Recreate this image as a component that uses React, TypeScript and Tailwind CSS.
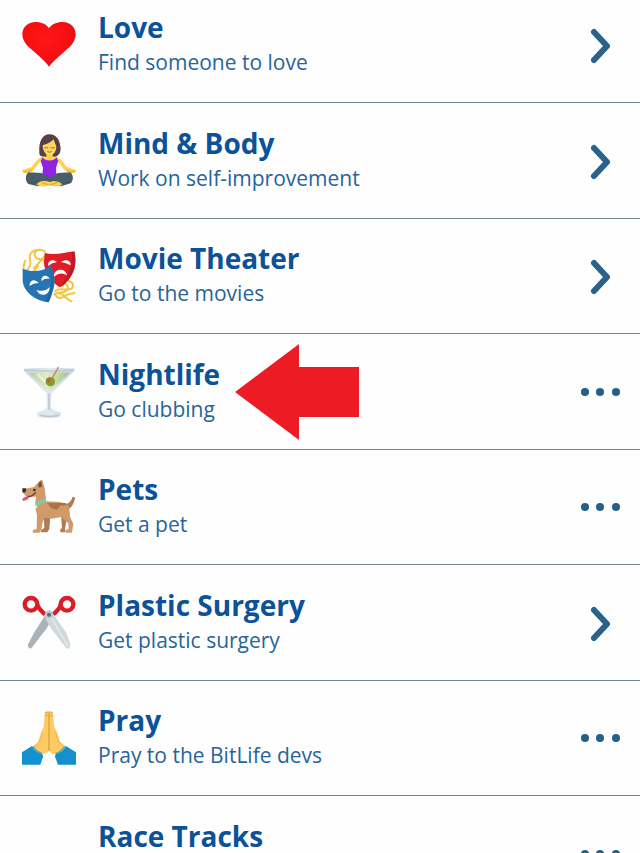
import React, { type ReactNode } from "react";

function Heart() {
  return (
    <g>
      <defs>
        <radialGradient id="heart" cx="45%" cy="38%" r="65%">
          <stop offset="0" stopColor="#ff1717" />
          <stop offset="0.7" stopColor="#f50f12" />
          <stop offset="1" stopColor="#cf161c" />
        </radialGradient>
      </defs>
      <path d="M117 173C107 158 86 141 67 124C52 111 37 97 37 76C37 54 54 39 76 39C96 39 110 46 117 58C124 46 139 39 158 39C180 39 197 54 197 76C197 97 183 111 168 124C149 141 128 158 117 173Z" fill="url(#heart)" />
    </g>
  );
}

function Meditation() {
  return (
    <g>
      <path d="M88 80C86 48 98 28 118 28C140 28 149 46 151 64C154 76 150 90 138 95H101C92 94 87 90 88 80Z" fill="#584044" />
      <path d="M97 100C83 106 78 120 68 130L45 139M138 100C152 106 158 120 166 130L190 139" fill="none" stroke="#ffd34f" strokeWidth="11" strokeLinecap="round" strokeLinejoin="round" />
      <path d="M37 134L51 137L65 132L69 137L54 145L39 142ZM198 134L184 137L170 132L166 137L181 145L196 142Z" fill="#f5bd3d" />
      <path d="M109 82H128V97L142 102L134 116H101L93 102L109 97Z" fill="#ffcf4a" />
      <path d="M98 61C110 58 123 51 131 43C133 53 138 60 139 66C138 82 129 91 119 91C108 91 98 79 98 61Z" fill="#ffd75f" />
      <path d="M104 68Q109 71 113 68M123 68Q128 71 133 68M113 80Q118 85 124 80" stroke="#9a6238" strokeWidth="3" fill="none" strokeLinecap="round" />
      <path d="M98 97C105 110 132 110 139 97L145 108L138 128L140 160H96L99 128L92 108Z" fill="#9124df" />
      <path d="M56 142L94 144L119 159L144 144L181 142C190 149 192 166 182 175L153 184L119 170L84 184L55 177C44 167 46 149 56 142Z" fill="#485f68" />
      <path d="M57 172L83 175L113 162M181 172L154 175L124 162" fill="none" stroke="#3a525c" strokeWidth="3" />
      <path d="M79 178C96 163 112 167 118 173C128 165 145 167 157 178C145 187 130 184 118 179C108 186 91 187 79 178Z" fill="#ffcf48" />
      <path d="M96 172L119 181L142 172" fill="none" stroke="#dfa02d" strokeWidth="3" />
    </g>
  );
}

function Masks() {
  return (
    <g>
      <g fill="none" stroke="#f2c544" strokeWidth="6" strokeLinecap="round">
        <path d="M105 35C87 21 70 35 75 49C81 63 96 52 108 65M105 47C93 57 86 75 71 84M88 29C67 29 55 43 60 59C65 75 55 92 42 96M46 62C40 77 39 83 44 97C58 106 71 98 84 78" />
        <path d="M176 123C194 128 192 145 178 148C165 151 145 143 136 153M157 139C166 121 178 137 170 151C161 165 139 150 133 164M137 165C145 182 160 171 170 165C180 159 189 164 194 158M145 160C165 160 168 180 184 184" />
      </g>
      <path d="M104 39C132 47 163 38 193 34C199 58 198 84 185 106C176 123 162 137 148 142C122 123 102 95 102 67Z" fill="#e01c27" />
      <path d="M185 37L193 35C199 62 194 88 184 105C176 120 161 135 149 140C179 109 190 70 185 37Z" fill="#c01726" />
      <path d="M114 78C113 63 126 55 141 66Q127 68 114 78ZM153 66C167 56 183 62 182 76Q168 68 153 66ZM132 110C130 85 166 81 171 106Q151 94 132 110Z" fill="#fff" />
      <path d="M38 86C67 98 98 95 123 77C133 99 138 127 130 148C126 165 121 178 116 187C77 183 42 158 38 124Z" fill="#2675b2" />
      <path d="M120 80C132 112 131 143 116 186L106 184C125 154 128 112 120 80Z" fill="#1d649d" />
      <path d="M59 138C58 122 73 114 86 129Q70 129 59 138ZM94 123C93 107 108 100 120 116Q105 114 94 123ZM80 150Q103 158 119 141C119 168 89 173 80 150Z" fill="#fff" />
    </g>
  );
}

function Martini() {
  return (
    <g>
      <defs>
        <linearGradient id="glass" x1="0" x2="1">
          <stop stopColor="#cbd6e0" />
          <stop offset="0.5" stopColor="#e3eaf0" />
          <stop offset="1" stopColor="#c3d0db" />
        </linearGradient>
        <linearGradient id="drink" x1="0" x2="1">
          <stop stopColor="#b3cda0" />
          <stop offset="0.45" stopColor="#e2ebc4" />
          <stop offset="1" stopColor="#a3c28c" />
        </linearGradient>
      </defs>
      <path d="M40 38Q117 33 195 38L190 47L125 111L123 149Q124 163 151 169Q157 179 145 184Q117 190 89 184Q78 178 84 169Q110 163 111 149L109 111L44 47Z" fill="url(#glass)" />
      <path d="M56 50Q117 46 179 50L122 103H113Z" fill="url(#drink)" />
      <path d="M43 42Q117 48 192 42" stroke="#b9c8d3" strokeWidth="4" fill="none" />
      <path d="M82 54L106 78" stroke="#fff" strokeWidth="8" opacity="0.5" />
      <circle cx="121" cy="77" r="14" fill="#7d9c32" />
      <circle cx="116" cy="73" r="6" fill="#d8552f" />
      <path d="M126 68L145 34" stroke="#c9855b" strokeWidth="4" strokeLinecap="round" />
      <path d="M117 112V162M91 178Q118 184 145 178" stroke="#b3c3cf" strokeWidth="4" fill="none" />
    </g>
  );
}

function Dog() {
  return (
    <g>
      <path d="M169 99Q183 94 188 77Q197 78 195 83Q190 103 178 113ZM101 127L121 132L118 174L112 184H92L94 176L103 171ZM153 130L169 151L165 174L166 184H151V175L156 171Z" fill="#b07c56" />
      <path d="M39 55L72 48L91 28L97 27L104 52L109 91L148 93Q173 96 178 109L180 137L190 159L186 185H167L166 178L176 173L175 157L153 138L126 143L103 140L97 158L94 175L89 185H69L68 178L80 173L81 132L75 107L78 77L49 77L40 66Z" fill="#d19a6b" />
      <path d="M88 34L94 30L96 47L88 50L84 42Z" fill="#75503b" />
      <path d="M111 96L165 96Q174 99 168 103L150 104L144 115Q125 117 119 105Z" fill="#ad734b" />
      <path d="M76 92L107 82L109 94L77 106Z" fill="#83c99b" />
      <path d="M77 101L83 108L77 113L73 106Z" fill="#e8f3e6" />
      <path d="M37 52L48 52L49 59L42 66L37 63Z" fill="#343031" />
      <circle cx="73" cy="57" r="4" fill="#322b28" />
      <path d="M52 76Q65 79 77 64" stroke="#523d31" strokeWidth="4" fill="none" />
      <path d="M57 76C49 78 44 77 39 82Q34 88 40 89Q50 90 59 79Z" fill="#e85076" />
    </g>
  );
}

function Scissors() {
  return (
    <g>
      <path d="M110 78L128 91L110 124L64 184Q52 186 54 172L74 134Z" fill="#a9b3b9" />
      <path d="M123 78L136 90L169 138L181 172Q182 185 170 185L122 123L105 92Z" fill="#d0d8dc" />
      <path d="M126 94L174 178" stroke="#e4eaec" strokeWidth="4" />
      <g fill="none" stroke="#d81e28" strokeWidth="13">
        <ellipse cx="63" cy="52" rx="19" ry="19" />
        <ellipse cx="171" cy="52" rx="19" ry="19" />
        <path d="M81 52Q86 66 105 82M153 52Q149 66 130 82" />
      </g>
      <circle cx="117" cy="82" r="12" fill="#bdc9ce" />
      <circle cx="117" cy="83" r="6" fill="#546e7d" />
    </g>
  );
}

function Hands() {
  return (
    <g>
      <path d="M109 28Q105 28 104 36L101 74L93 92L84 120L69 133L91 156L108 154Q115 150 117 143Q119 151 127 155L145 156L166 132L150 119L141 91L132 73L130 36Q129 28 124 28Z" fill="#fccb62" />
      <path d="M117 32V148" stroke="#d8a04a" strokeWidth="4" fill="none" />
      <path d="M105 33Q111 28 116 34Q122 28 129 34M105 41H128" stroke="#e8ad45" strokeWidth="3" fill="none" />
      <path d="M98 91L88 122L74 133M136 90L146 122L162 133" stroke="#f0b955" strokeWidth="3" fill="none" />
      <path d="M36 151L66 132Q75 150 96 156Q100 161 99 164L91 188H36ZM198 151L168 132Q159 150 138 156Q134 161 135 164L144 188H198Z" fill="#1590cf" />
      <path d="M69 133Q78 148 97 155M165 133Q155 149 137 155" stroke="#5a9e9a" strokeWidth="4" fill="none" />
    </g>
  );
}

type Activity = {
  title: string;
  detail: string;
  icon?: ReactNode;
  more?: boolean;
  marked?: boolean;
};

const activities: Activity[] = [
  { title: "Love", detail: "Find someone to love", icon: <Heart /> },
  { title: "Mind & Body", detail: "Work on self-improvement", icon: <Meditation /> },
  { title: "Movie Theater", detail: "Go to the movies", icon: <Masks /> },
  { title: "Nightlife", detail: "Go clubbing", icon: <Martini />, more: true, marked: true },
  { title: "Pets", detail: "Get a pet", icon: <Dog />, more: true },
  { title: "Plastic Surgery", detail: "Get plastic surgery", icon: <Scissors /> },
  { title: "Pray", detail: "Pray to the BitLife devs", icon: <Hands />, more: true },
  { title: "Race Tracks", detail: "", more: true },
];

function Row({ title, detail, icon, more, marked }: Activity) {
  return (
    <li className="relative border-b border-[#71858f] odd:h-[115px] even:h-[116px]">
      <button type="button" className="flex h-full w-full items-center gap-[22px] pl-[22px] pr-5 text-left">
        <svg viewBox="36 27 162 162" className="size-[54px] shrink-0 overflow-visible" aria-hidden="true">
          {icon}
        </svg>
        <span className="flex min-w-0 flex-1 flex-col gap-0.5">
          <span className="text-[28px] leading-8 font-bold text-[#0c5299]">{title}</span>
          <span className="h-[34px] text-[21px] leading-[34px] text-[#28649a]">{detail}</span>
        </span>
        <svg viewBox="0 0 40 40" className="size-10 shrink-0" aria-hidden="true">
          {more ? (
            <g fill="#245f89">
              <circle cx="5" cy="20" r="4" />
              <circle cx="20" cy="20" r="4" />
              <circle cx="36" cy="20" r="4" />
            </g>
          ) : (
            <path d="M14 7L27 21L14 35" fill="none" stroke="#2b628c" strokeWidth="6" strokeLinecap="round" strokeLinejoin="round" />
          )}
        </svg>
      </button>
      {marked && (
        <svg viewBox="0 0 124 96" className="pointer-events-none absolute left-[235px] top-[10px] h-24 w-[124px]" aria-hidden="true">
          <path d="M0 48L64 0V23H124V73H64V96Z" fill="#ed1c24" />
        </svg>
      )}
    </li>
  );
}

export default function App() {
  return (
    <main className="h-screen overflow-hidden bg-[#fefefe] font-['Open_Sans','Noto_Sans',sans-serif]">
      <ul className="-mt-3">
        {activities.map((activity) => (
          <Row key={activity.title} {...activity} />
        ))}
      </ul>
    </main>
  );
}
